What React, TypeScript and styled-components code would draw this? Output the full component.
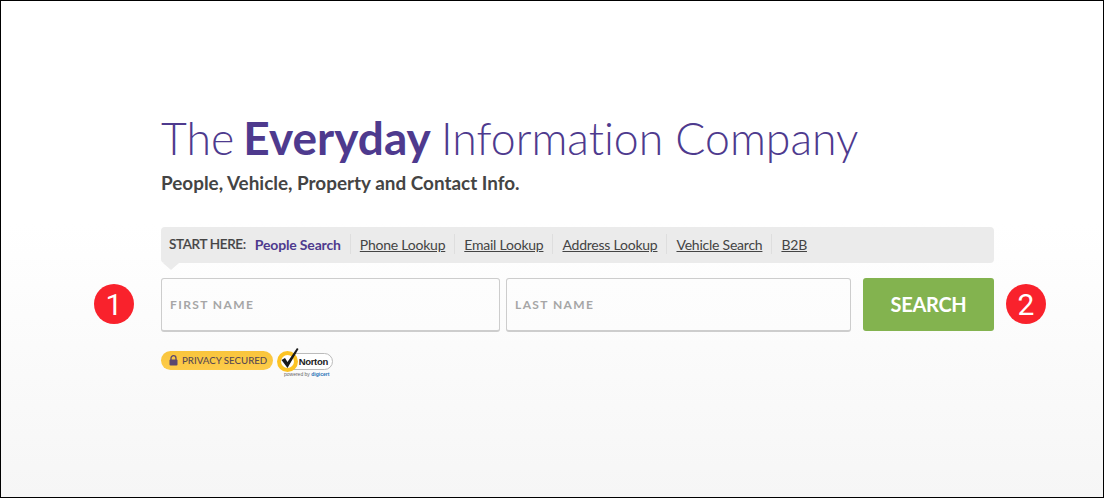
import React from 'react'
import styled, { createGlobalStyle } from 'styled-components'

const GlobalStyle = createGlobalStyle`
  html, body {
    margin: 0;
    padding: 0;
  }
  body {
    font-family: Lato, "Liberation Sans", sans-serif;
  }
`

const Page = styled.div`
  box-sizing: border-box;
  width: 1104px;
  height: 498px;
  border: 1px solid #000;
  background: linear-gradient(to bottom, #fff 0%, #fff 45%, #f6f6f6 100%);
  padding: 111px 0 0 160px;
`

const Content = styled.div`
  width: 833px;
`

const Title = styled.h1`
  margin: 0;
  font-size: 44.6px;
  line-height: 52px;
  font-weight: 300;
  color: #4e3a8e;
  white-space: nowrap;
  font-variant-ligatures: none;

  strong {
    font-size: 46px;
    font-weight: 700;
    margin: 0 -2px 0 -3px;
  }
`

const Subtitle = styled.h2`
  margin: 6px 0 0;
  font-size: 18.9px;
  line-height: 26px;
  font-weight: 700;
  color: #444;
`

const NavBar = styled.nav`
  position: relative;
  box-sizing: border-box;
  display: flex;
  align-items: center;
  height: 36px;
  margin-top: 31px;
  padding: 0 0 2px 8px;
  background: #ebebeb;
  border-radius: 4px;
  font-size: 14px;

  &::after {
    content: '';
    position: absolute;
    left: 2px;
    bottom: -7px;
    border-style: solid;
    border-width: 7px 8px 0;
    border-color: #ebebeb transparent transparent;
  }
`

const NavLabel = styled.span`
  font-size: 13.5px;
  font-weight: 500;
  color: #444;
  letter-spacing: -0.35px;
  margin-right: 9px;
  -webkit-text-stroke: 0.2px #444;
`

const NavItem = styled.a<{ $active?: boolean }>`
  display: flex;
  align-items: center;
  height: 20px;
  padding: 0 9px;
  color: ${(p) => (p.$active ? '#4e3a8e' : '#444')};
  font-weight: ${(p) => (p.$active ? 700 : 400)};
  text-decoration: ${(p) => (p.$active ? 'none' : 'underline')};
  border-right: 1px solid #dedede;
  letter-spacing: ${(p) => (p.$active ? '-0.16px' : '-0.23px')};

  &:first-of-type {
    padding-left: 0;
  }

  &:last-child {
    border-right: 0;
  }
`

const FormRow = styled.div`
  position: relative;
  display: flex;
  margin-top: 15px;
`

const Field = styled.div<{ $width: number }>`
  box-sizing: border-box;
  display: flex;
  align-items: center;
  width: ${(p) => p.$width}px;
  height: 54px;
  padding-left: 8px;
  margin-right: 6px;
  background: linear-gradient(to bottom, #fdfdfd, #fcfcfc);
  border: 1px solid #cdcdcd;
  border-bottom-width: 2px;
  border-radius: 3px;
  font-size: 12px;
  font-weight: 700;
  letter-spacing: 1.4px;
  color: #a6a6a6;
`

const SearchButton = styled.button`
  width: 131px;
  height: 53px;
  margin-left: 6px;
  padding: 0 0 2px;
  border: 0;
  border-radius: 3px;
  background: #83b34f;
  color: #fff;
  font-family: inherit;
  font-size: 20px;
  font-weight: 700;
  letter-spacing: -0.3px;
`

const Marker = styled.div<{ $side: 'left' | 'right' }>`
  position: absolute;
  top: 6px;
  ${(p) => (p.$side === 'left' ? 'left: -67px;' : 'right: -52px;')}
  width: 40px;
  height: 40px;
  border-radius: 50%;
  background: #f9222c;
  color: #fff;
  display: flex;
  align-items: center;
  justify-content: center;
  font-family: Roboto, Arial, sans-serif;
  font-size: 30px;
`

const TrustRow = styled.div`
  display: flex;
  align-items: flex-start;
  margin-top: 17px;
`

const PrivacyBadge = styled.div`
  box-sizing: border-box;
  display: flex;
  align-items: center;
  gap: 4px;
  width: 112px;
  height: 19px;
  margin: 2px 5px 0 0;
  padding: 0 0 1px 8px;
  border-radius: 10px;
  background: linear-gradient(to bottom, #f9c53c, #fdcb4a);
  color: #5a4a52;
  font-size: 9.7px;
  font-weight: 500;
  white-space: nowrap;
`

const LockIcon = () => (
  <svg width="9" height="11" viewBox="0 0 9 11">
    <path d="M2 5V3.2a2.5 2.5 0 0 1 5 0V5" fill="none" stroke="#5b4770" strokeWidth="1.3" />
    <rect x="0.5" y="4.6" width="8" height="6" rx="1" fill="#5b4770" />
  </svg>
)

const NortonBlock = styled.div`
  display: flex;
  flex-direction: column;
  width: 55px;
`

const NortonPill = styled.div`
  position: relative;
  box-sizing: border-box;
  display: flex;
  align-items: center;
  justify-content: flex-end;
  height: 17px;
  margin-top: 4px;
  padding-right: 4px;
  border: 1px solid #bbb;
  border-radius: 9px;
  background: #fff;
  font-family: "Liberation Sans", Arial, sans-serif;
  font-size: 9.5px;
  font-weight: 700;
  letter-spacing: -0.3px;
  color: #222;
`

const NortonSeal = styled.svg`
  position: absolute;
  left: -2px;
  top: -6px;
`

const PoweredBy = styled.div`
  margin: 1px 0 0 6px;
  font-family: "Liberation Sans", Arial, sans-serif;
  font-size: 5px;
  line-height: 7px;
  color: #666;
  white-space: nowrap;

  b {
    color: #1f6fb5;
  }
`

const navLinks = ['Phone Lookup', 'Email Lookup', 'Address Lookup', 'Vehicle Search', 'B2B']

export default function App() {
  return (
    <Page>
      <GlobalStyle />
      <Content>
        <Title>
          The <strong>Everyday</strong> Information Company
        </Title>
        <Subtitle>People, Vehicle, Property and Contact Info.</Subtitle>
        <NavBar>
          <NavLabel>START HERE:</NavLabel>
          <NavItem $active>People Search</NavItem>
          {navLinks.map((l) => (
            <NavItem key={l} href="#">
              {l}
            </NavItem>
          ))}
        </NavBar>
        <FormRow>
          <Marker $side="left">1</Marker>
          <Field $width={339}>FIRST NAME</Field>
          <Field $width={345}>LAST NAME</Field>
          <SearchButton>SEARCH</SearchButton>
          <Marker $side="right">2</Marker>
        </FormRow>
        <TrustRow>
          <PrivacyBadge>
            <LockIcon />
            PRIVACY SECURED
          </PrivacyBadge>
          <NortonBlock>
            <NortonPill>
              <NortonSeal width="24" height="26" viewBox="0 0 24 26">
                <circle cx="10.5" cy="13.5" r="8.5" fill="#fff" stroke="#fcc324" strokeWidth="4" />
                <path d="M4.5 12L8 10l2.5 4L20 0l1.5 1-11 19z" fill="#1a1a1a" />
              </NortonSeal>
              Norton
            </NortonPill>
            <PoweredBy>
              powered by <b>digicert</b>
            </PoweredBy>
          </NortonBlock>
        </TrustRow>
      </Content>
    </Page>
  )
}
